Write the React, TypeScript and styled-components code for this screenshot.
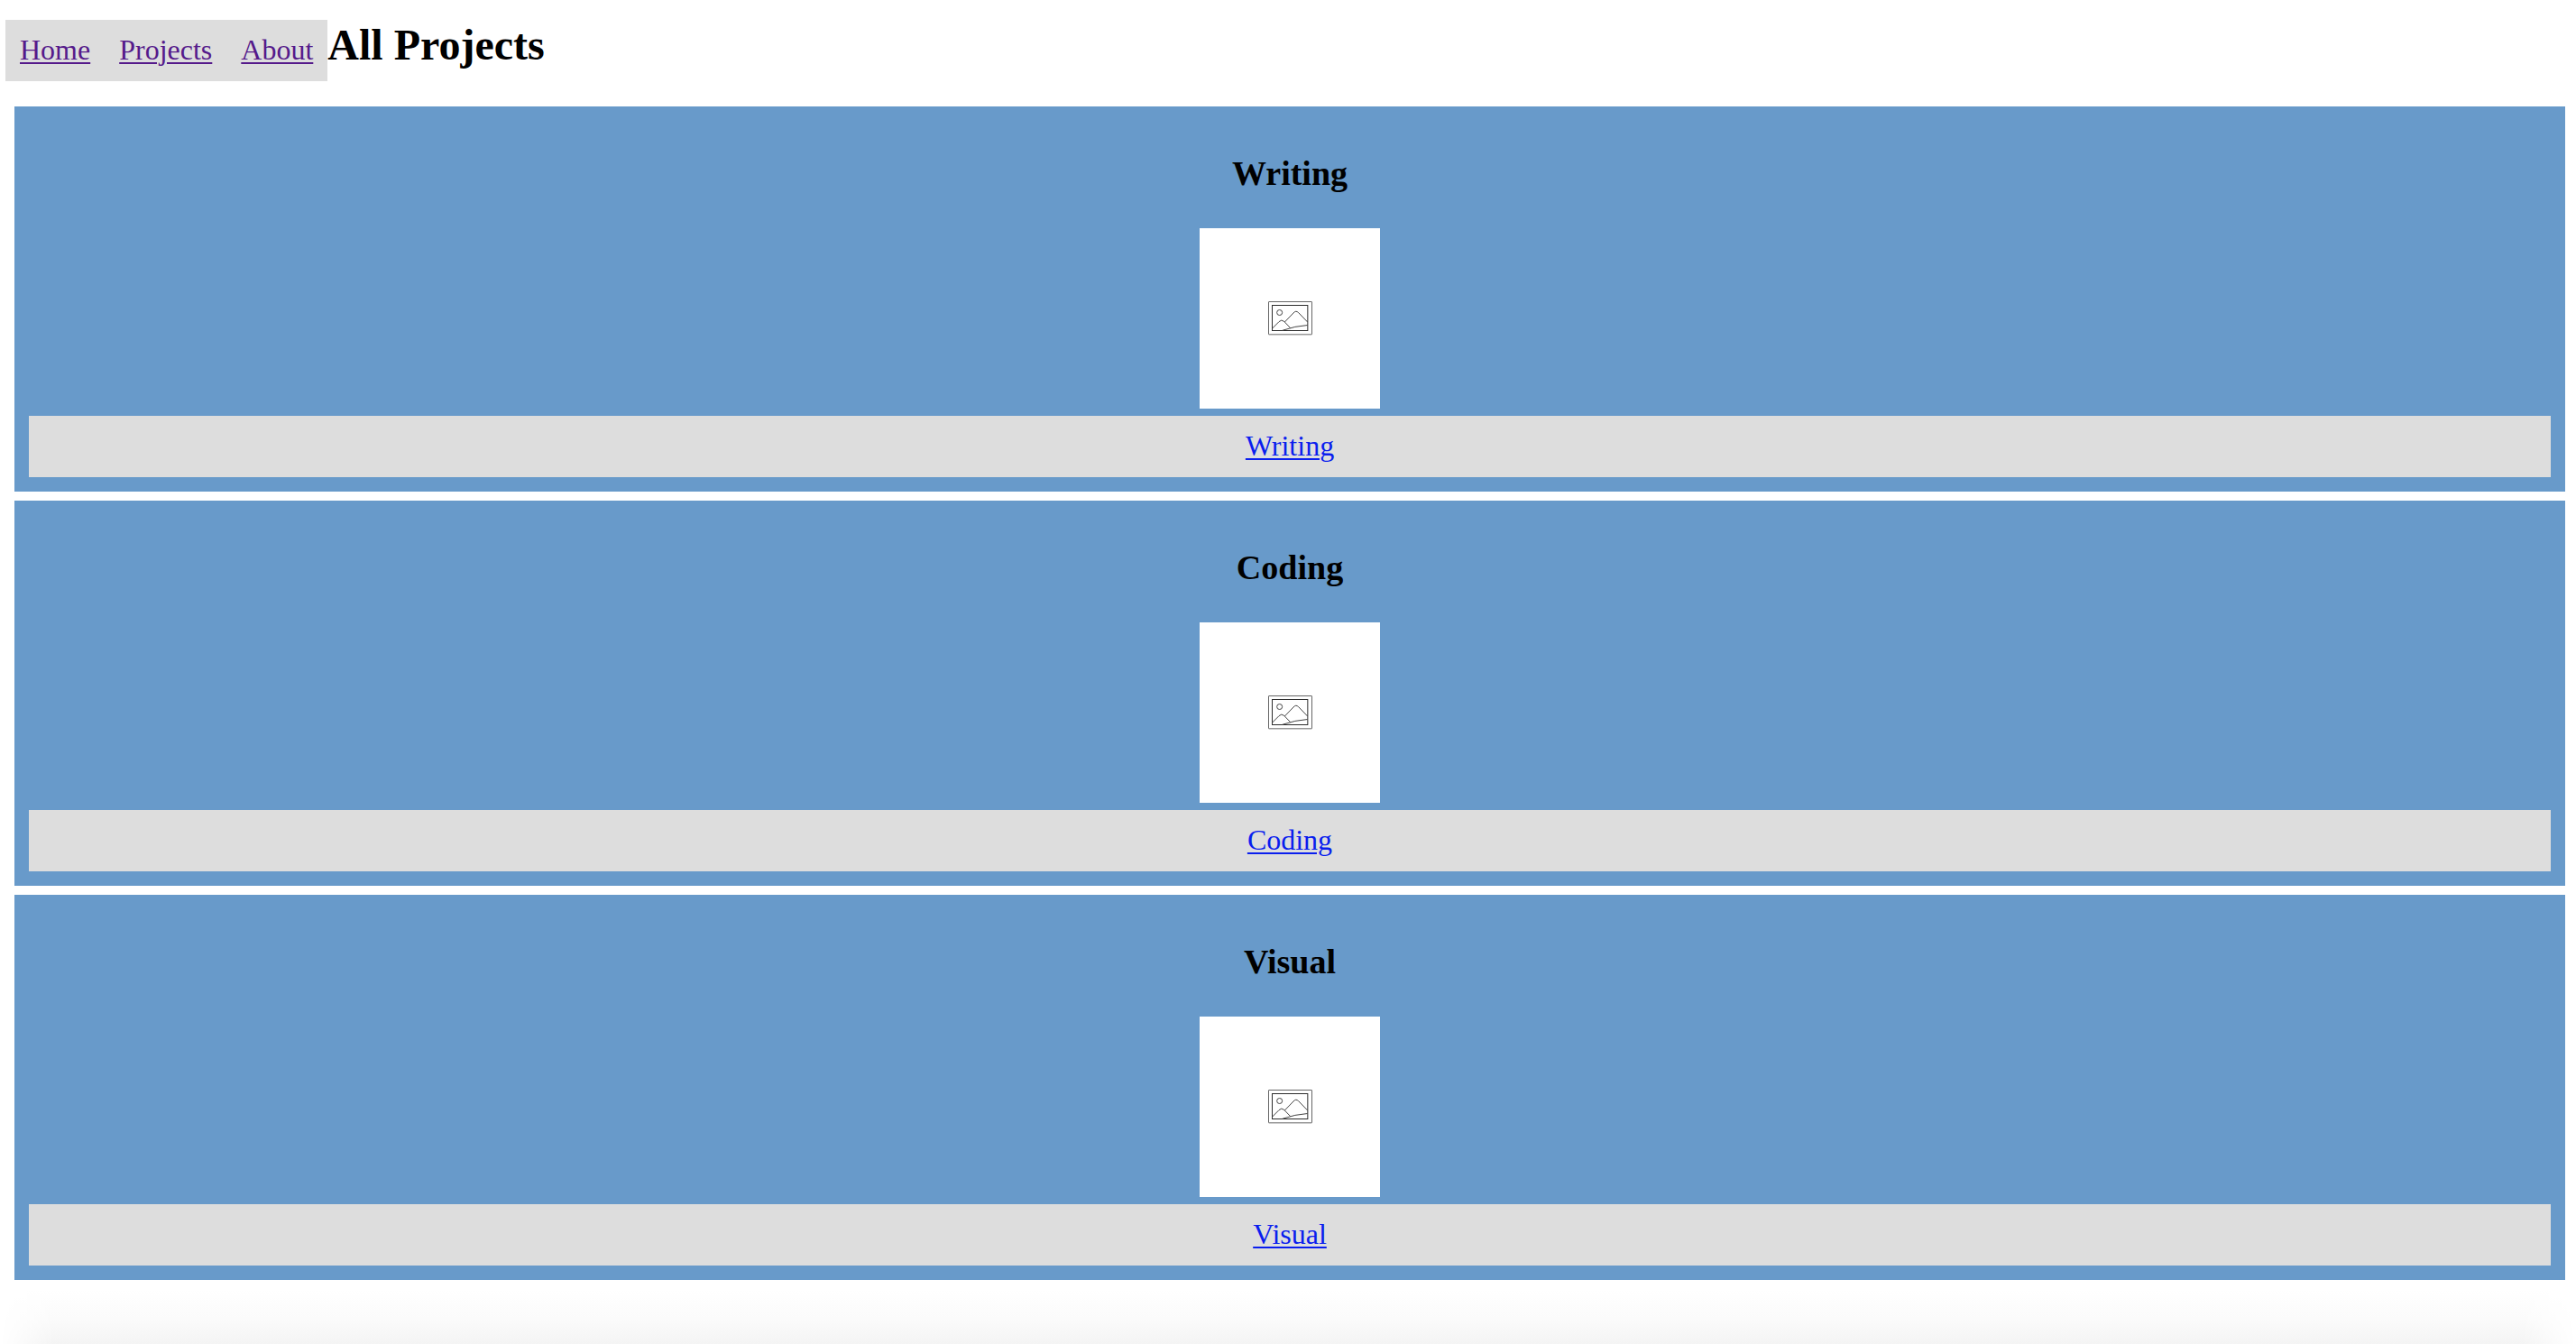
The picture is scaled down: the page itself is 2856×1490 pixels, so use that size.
import React from "react";
import styled, { createGlobalStyle } from "styled-components";

const GlobalStyle = createGlobalStyle`
  body {
    margin: 0;
    background: #ffffff;
    color: #000000;
    font-family: "Liberation Serif", "Times New Roman", serif;
    font-size: 32px;
    line-height: 36px;
  }
`;

const Page = styled.div`
  display: flex;
  flex-direction: column;
  min-height: 100vh;
`;

const Header = styled.header`
  display: flex;
  align-items: baseline;
  padding: 22px 6px 28px;
`;

const Nav = styled.nav`
  display: flex;
  background: #dddddd;
`;

const TextLink = styled.a<{ $visited?: boolean }>`
  padding: 15px 16px 17px;
  color: ${({ $visited }) => ($visited ? "#551a8b" : "#0a1eee")};
  text-decoration-line: underline;
  text-decoration-thickness: 2px;
  text-underline-offset: 3px;
`;

const Title = styled.h1`
  margin: 0;
  font-size: 48px;
  line-height: 54px;
`;

const ProjectList = styled.main`
  display: flex;
  flex-direction: column;
  gap: 10px;
  padding: 0 12px 0 16px;
`;

const Card = styled.article`
  display: flex;
  flex-direction: column;
  align-items: center;
  padding: 16px;
  background: #689aca;
`;

const CardTitle = styled.h2`
  margin: 37px 0 39px;
  font-size: 38px;
  line-height: 43px;
`;

const Thumbnail = styled.div`
  display: grid;
  place-items: center;
  width: 200px;
  height: 200px;
  margin-bottom: 8px;
  background: #ffffff;
`;

const CardFooter = styled.div`
  display: flex;
  justify-content: center;
  align-self: stretch;
  background: #dddddd;
`;

const BottomShade = styled.div`
  flex: 1;
  background: linear-gradient(#ffffff 15%, #fbfbfb 60%, #f4f4f4);
  mask-image: linear-gradient(
    to right,
    transparent,
    #000000 60px,
    #000000 calc(100% - 60px),
    transparent
  );
`;

const PictureIcon = () => (
  <svg
    width="50"
    height="40"
    viewBox="45 39 150 120"
    fill="none"
    role="img"
    aria-label="Image placeholder"
  >
    <rect x="49.5" y="43.5" width="144" height="109" rx="1" stroke="#666666" strokeWidth="3" />
    <rect x="61.5" y="55.5" width="118" height="84" stroke="#2c2c2c" strokeWidth="3" />
    <g stroke="#444444" strokeWidth="3">
      <circle cx="86" cy="79.5" r="9" />
      <path d="M62 132L84 110Q92 101 101 109L122 131" />
      <path d="M103 111L132 81Q140 71 149 80L179 111" />
      <path d="M95 139Q138 124 179 121.500" />
    </g>
  </svg>
);

const pages = [
  { label: "Home", href: "#home" },
  { label: "Projects", href: "#projects" },
  { label: "About", href: "#about" },
];

const projects = [
  { name: "Writing", href: "#writing" },
  { name: "Coding", href: "#coding" },
  { name: "Visual", href: "#visual" },
];

export default function App() {
  return (
    <Page>
      <GlobalStyle />
      <Header>
        <Nav>
          {pages.map((page) => (
            <TextLink key={page.href} href={page.href} $visited>
              {page.label}
            </TextLink>
          ))}
        </Nav>
        <Title>All Projects</Title>
      </Header>
      <ProjectList>
        {projects.map((project) => (
          <Card key={project.href}>
            <CardTitle>{project.name}</CardTitle>
            <Thumbnail>
              <PictureIcon />
            </Thumbnail>
            <CardFooter>
              <TextLink href={project.href}>{project.name}</TextLink>
            </CardFooter>
          </Card>
        ))}
      </ProjectList>
      <BottomShade />
    </Page>
  );
}
